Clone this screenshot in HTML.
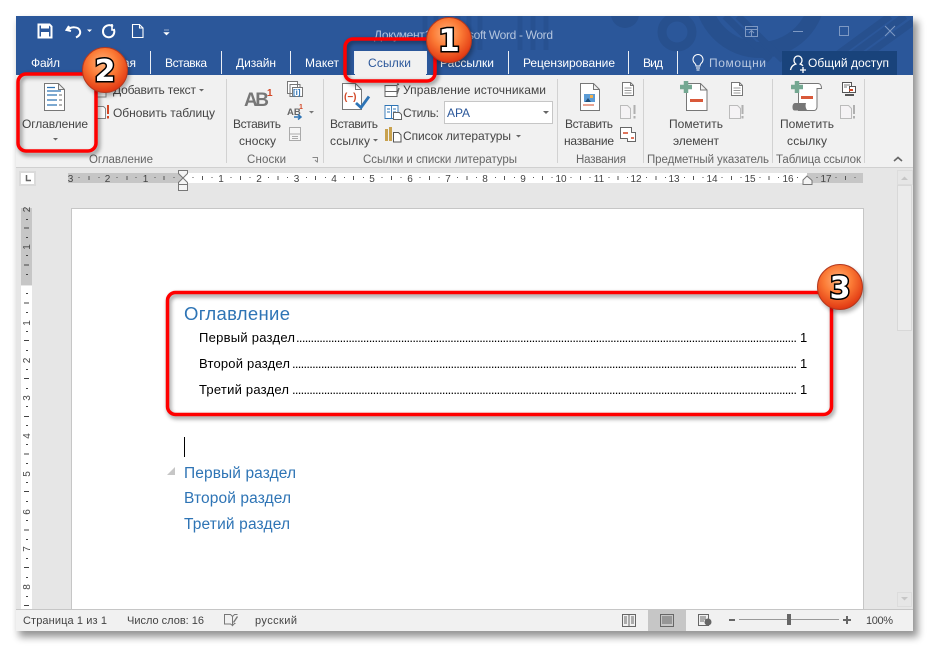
<!DOCTYPE html>
<html><head><meta charset="utf-8"><style>
html,body{margin:0;padding:0;background:#fff;width:929px;height:647px;overflow:hidden}
svg{display:block;position:absolute;left:0;top:0}
text{font-family:"Liberation Sans","DejaVu Sans",sans-serif;font-size:12px;fill:#444;white-space:pre}
.tab text{fill:#fff}
.grp text{fill:#666;font-size:11.5px}
.st text{fill:#444;font-size:11px}
.toc text{fill:#000;font-size:13px}
.h text{fill:#2e74b5;font-size:15.5px}
.rl text{font-size:10px;fill:#444}
</style></head><body>
<svg width="929" height="647" viewBox="0 0 929 647" xmlns="http://www.w3.org/2000/svg">
<defs>
<filter id="ws" x="-5%" y="-5%" width="110%" height="110%"><feGaussianBlur stdDeviation="4"/></filter>
<filter id="rs" x="-10%" y="-20%" width="120%" height="140%"><feGaussianBlur stdDeviation="2"/></filter>
<radialGradient id="ball" cx="45%" cy="35%" r="70%"><stop offset="0" stop-color="#ffb27a"/><stop offset=".45" stop-color="#fb7a35"/><stop offset="1" stop-color="#dc2c0c"/></radialGradient>
<clipPath id="bar"><rect x="16" y="16" width="897" height="59"/></clipPath>
</defs>
<rect x="19" y="21" width="899" height="616" fill="#000" opacity=".42" filter="url(#ws)"/>
<rect x="16" y="16" width="897" height="615" fill="#e6e6e6"/>
<!-- title bar -->
<rect x="16" y="16" width="897" height="59" fill="#2b579a"/>
<g clip-path="url(#bar)" fill="none" stroke="#27508e">
<circle cx="677" cy="32" r="15" stroke-width="9"/>
<circle cx="625" cy="14" r="14" fill="#27508e" stroke="none"/>
<circle cx="760" cy="-8" r="58" stroke-width="16"/>
<path d="M425 16V50M436 16V50M447 16V50M458 16V50M469 16V50M480 16V50M520 16V50M533 16V50M546 16V50" stroke-width="5" opacity=".8"/>
<path d="M830 60L890 16M845 60L905 16M860 60L913 22M725 16L770 60M738 16L783 60" stroke-width="7"/>
</g>
<!-- QAT -->
<g>
<path d="M38.500 24.500h11l2 2v11h-13z" fill="none" stroke="#fff" stroke-width="2"/>
<rect x="41" y="24" width="8" height="4.500" fill="#fff"/><rect x="41" y="32" width="8" height="5" fill="#fff"/>
<path d="M69 26l-2.500 4 4.500 1M67.500 30c3-3.500 11-4 12.500 1 .8 3-1 5-4 6.500" fill="none" stroke="#fff" stroke-width="2"/>
<path d="M87 29.500h5l-2.500 2.500z" fill="#fff"/>
<path d="M113 26.500c-4-3-10-.5-10 5 0 6.500 9 8 11 2 .5-1.500.4-3-.2-4.500" fill="none" stroke="#fff" stroke-width="2"/><path d="M112 24v6h3" fill="none" stroke="#fff" stroke-width="1.600"/>
<path d="M132.500 24.500h7l3.500 3.500v9.500h-10.500z M139.500 24.500v3.500h3.500" fill="none" stroke="#fff" stroke-width="1.100"/>
<path d="M164 30h5M164 32.500h5l-2.500 2.500z" fill="#fff" stroke="#fff" stroke-width=".6"/>
</g>
<text x="374" y="39" textLength="179" style="fill:#b4c5de;font-size:12px">Документ1 - Microsoft Word - Word</text>
<g fill="none" stroke="#7e99c3">
<path d="M745.500 26.500h12v10h-12zM745.500 29.500h12M751.500 36v-5M749 33l2.500-2.500 2.500 2.500"/>
<path d="M793 31.500h10"/>
<rect x="839.500" y="26.500" width="9" height="9"/>
<path d="M885 26l10 10M895 26l-10 10"/>
</g>
<!-- tabs -->
<rect x="782" y="51" width="115" height="24" fill="#19437b"/>
<g stroke="#fff" opacity=".9"><path d="M150.500 51v23M221.500 51v23M290.500 51v23M508.500 51v23M628.500 51v23M677.500 51v23M354.500 51v23M426.500 51v23"/></g>
<rect x="355" y="51" width="71" height="24" fill="#f1f1f1"/>
<g class="tab">
<text x="31" y="67" textLength="29">Файл</text>
<text x="91" y="67" textLength="45">Главная</text>
<text x="165" y="67" textLength="42">Вставка</text>
<text x="236" y="67" textLength="40">Дизайн</text>
<text x="305" y="67" textLength="34">Макет</text>
<text x="440" y="67" textLength="54">Рассылки</text>
<text x="523" y="67" textLength="92">Рецензирование</text>
<text x="643" y="67" textLength="20">Вид</text>
<text x="709" y="67" textLength="57" style="fill:#b9c8e0">Помощни</text>
<text x="808" y="67" textLength="81">Общий доступ</text>
</g>
<text x="368" y="67" textLength="43" style="fill:#2b579a">Ссылки</text>
<path d="M695 57.500a5 5 0 1 1 6 0c-.6.6-1 1.500-1 2.500h-4c0-1-.4-1.900-1-2.500zM696 62h4M696.500 64h3" fill="none" stroke="#fff" transform="translate(0,6)"/>
<path d="M798 56c-2.500 0-4 2-4 4.200 0 1.800.8 3 1.800 3.800-3 1-4.800 3-5.300 6M798 56c2.500 0 4 2 4 4.200 0 1.800-.8 3-1.800 3.800 1 .4 2 1 2.800 1.700M800 70h6M803 67v6" fill="none" stroke="#fff" stroke-width="1.300"/>
<!-- ribbon -->
<rect x="16" y="75" width="897" height="92" fill="#f1f1f1"/>
<rect x="16" y="167" width="897" height="1" fill="#d0d0d0"/>
<g stroke="#d2d2d2"><path d="M226.500 79v84M323.500 79v84M557.500 79v84M643.500 79v84M772.500 79v84M864.500 79v84"/></g>
<!-- Оглавление icon -->
<path d="M44.500 83.500h14l6 6v21h-20z M58.500 83.500v6h6" fill="#fff" stroke="#777"/>
<path d="M47 87.500h8M47 91h14M47 95h10M47 100h10M47 105h10" stroke="#2e74b5" stroke-width="1.200"/>
<path d="M59 95h3M59 100h3M59 105h3" stroke="#888" stroke-width="1.200"/>
<text x="22" y="128" textLength="66">Оглавление</text>
<path d="M53 138h5l-2.500 2.500z" fill="#666"/>
<!-- Add/update -->
<path d="M97 85h9v12h-9z" fill="#fff" stroke="#888"/>
<text x="113" y="94" textLength="83">Добавить текст</text>
<path d="M199 89h5l-2.500 2.500z" fill="#666"/>
<path d="M96.500 106.500h7l2 2v10h-9z" fill="#fff" stroke="#888"/><path d="M108 105v9M108 116v2.500" stroke="#d24726" stroke-width="2"/>
<text x="113" y="117" textLength="102">Обновить таблицу</text>
<!-- Сноски -->
<text x="244" y="106" style="font-size:19px;font-weight:bold;fill:#777" textLength="25">AB</text>
<text x="267" y="96" style="font-size:10px;fill:#d24726;font-weight:bold">1</text>
<text x="233" y="128" textLength="48">Вставить</text>
<text x="239" y="145" textLength="37">сноску</text>
<path d="M287.500 81.500h10v12h-10zM290 84.500h10v12h-10z" fill="#fff" stroke="#777"/><path d="M292.500 87.500h10v9h-10z" fill="#fff" stroke="#777"/>
<text x="293" y="95" style="font-size:8px;fill:#2e74b5;font-weight:bold">[i]</text>
<text x="287" y="115" style="font-size:9.500px;font-weight:bold;fill:#666">AB</text><text x="299" y="109" style="font-size:7px;font-weight:bold;fill:#d24726">1</text>
<path d="M294 117h6M298 114.500l3 2.500-3 2.500" fill="none" stroke="#2e74b5" stroke-width="1.500"/>
<path d="M309 111h5l-2.500 2.500z" fill="#777"/>
<path d="M289.500 127.500h11v13h-11z" fill="#f5f5f5" stroke="#aaa"/><path d="M289.500 134h11M292 136.500h6M292 138.500h6" stroke="#aaa"/>
<!-- Ссылки icon -->
<path d="M342.500 83.500h13l6 6v20h-19z" fill="#fff" stroke="#777"/><path d="M355.500 83.500v6h6" fill="none" stroke="#777"/>
<text x="344" y="100" style="font-size:10px;font-weight:bold;fill:#d24726">(−)</text>
<path d="M356 103l5 4.500 8-11" fill="none" stroke="#2e74b5" stroke-width="2.800"/>
<text x="330" y="128" textLength="48">Вставить</text>
<text x="330" y="145" textLength="40">ссылку</text>
<path d="M373 139h5l-2.500 2.500z" fill="#666"/>
<path d="M385 85.500h12v6h-12zM385 91.500h12v5h-12z" fill="#fff" stroke="#666"/><path d="M397 84l2 .5M399 88l-2 6" stroke="#666" stroke-width="1.500"/>
<text x="403" y="94" textLength="143">Управление источниками</text>
<path d="M385 105.500h13v13h-13zM391.500 105.500v13M387 109h3M387 112h3M393 109h3M393 112h3" fill="#fff" stroke="#2e74b5" stroke-width=".9"/>
<path d="M393.500 112.500h6l2 2v5h-8z" fill="#fff" stroke="#666"/>
<text x="403" y="117" textLength="36">Стиль:</text>
<rect x="444.500" y="101.500" width="108" height="22" fill="#fff" stroke="#c6c6c6"/>
<text x="447" y="117" textLength="23" style="fill:#2b579a">APA</text>
<path d="M543 111h6l-3 3z" fill="#666"/>
<path d="M385 129h3v12h-3zM389 127h3v14h-3z" fill="#c9a24e"/><path d="M393.500 132.500h5l2.500 2.500v7h-7.500z" fill="#fff" stroke="#555"/>
<text x="403" y="140" textLength="108">Список литературы</text>
<path d="M516 135h5l-2.500 2.500z" fill="#666"/>
<!-- Названия -->
<path d="M580.500 83.500h13l6 6v21h-19z M593.500 83.500v6h6" fill="#fff" stroke="#777"/>
<rect x="584" y="94" width="11" height="8" fill="#5b9bd5"/><path d="M585 102l3-4 3 4z" fill="#1f4e79"/><rect x="590" y="95" width="3" height="3" fill="#f0b050"/>
<path d="M583 105h11" stroke="#d24726"/>
<text x="565" y="128" textLength="48">Вставить</text>
<text x="564" y="145" textLength="50">название</text>
<path d="M622.500 82.500h8l3 3v10h-11zM630.500 82.500v3h3" fill="#fff" stroke="#777"/><path d="M624.500 88h7M624.500 90.500h7M624.500 93h7" stroke="#999"/>
<path d="M620.500 105.500h7l3 3v10h-10z" fill="#f5f3f5" stroke="#bbb"/><path d="M634.500 105v9M634.500 116v2.500" stroke="#b0b0b0" stroke-width="2"/>
<path d="M620.500 127.500h11v11h-11z" fill="#fff" stroke="#666"/><path d="M623 133h5" stroke="#d24726" stroke-width="1.500"/><path d="M631.500 132.500h4v9h-8v-3" fill="#fff" stroke="#666"/><path d="M631 138h3" stroke="#d24726" stroke-width="1.500"/>
<!-- Пометить элемент -->
<path d="M686.500 83.500h14l6.500 6.500v20.500h-20.500z M700.500 83.500v6.500h6.500" fill="#fff" stroke="#777"/>
<path d="M690 100.500h13" stroke="#d9593a" stroke-width="3"/>
<path d="M680 87h12M686 81v12" stroke="#74a892" stroke-width="4.500"/>
<text x="669" y="128" textLength="54">Пометить</text>
<text x="673" y="145" textLength="46">элемент</text>
<path d="M731.500 82.500h8l3 3v10h-11z M739.500 82.500v3h3" fill="#fff" stroke="#777"/><path d="M733.500 88h7M733.500 90.500h7M733.500 93h7" stroke="#999"/>
<path d="M729.500 105.500h8l3 3v10h-11z" fill="#f5f3f5" stroke="#bbb"/><path d="M742.500 105v9M742.500 116v2.500" stroke="#b0b0b0" stroke-width="2"/>
<!-- Пометить ссылку -->
<path d="M798.500 83.500h19.500c2.500 0 3.500 2.500 3.500 5h-4.500v18.500c0 2.200-1.500 3.500-3 3.500h-15.500z" fill="#fff" stroke="#777"/>
<path d="M795 103h11c-.8 2.500-.5 5.500 1.500 7.500h-13c-1.500 0-2-1.500-2-3.500s1-4 2.500-4z" fill="#777"/>
<path d="M801 97.500h12" stroke="#d9593a" stroke-width="3"/>
<path d="M791 87h12M797 81v12" stroke="#74a892" stroke-width="4.500"/>
<text x="780" y="128" textLength="54">Пометить</text>
<text x="787" y="145" textLength="40">ссылку</text>
<path d="M842.500 82.500h9v10h-9z" fill="#fff" stroke="#555"/><path d="M844 85h6M844 87h3" stroke="#777"/><path d="M849.500 86.500h6v6h-6z" fill="#fff" stroke="#555"/><rect x="849" y="89" width="4" height="2" fill="#d24726"/><path d="M845 94h9v2h-9z" fill="#555"/>
<path d="M840.500 105.500h8l3 3v10h-11z" fill="#f5f3f5" stroke="#bbb"/><path d="M854 105v9M854 116v2.500" stroke="#b0b0b0" stroke-width="2"/>
<path d="M894 161l4-3.500 4 3.500" fill="none" stroke="#666" stroke-width="1.600"/>
<g class="grp">
<text x="89" y="163" textLength="64">Оглавление</text>
<text x="247" y="163" textLength="39">Сноски</text>
<text x="363" y="163" textLength="154">Ссылки и списки литературы</text>
<text x="576" y="163" textLength="50">Названия</text>
<text x="647" y="163" textLength="122">Предметный указатель</text>
<text x="776" y="163" textLength="85">Таблица ссылок</text>
</g>
<path d="M312.500 157.500h5v5M315 160l2 2" fill="none" stroke="#888"/>
<!-- ruler -->
<rect x="16" y="168" width="897" height="442" fill="#e6e6e6"/>
<rect x="20" y="172" width="15" height="13" fill="#fff" stroke="#dadada" stroke-width="2"/>
<path d="M26.500 175v5.500h4.500" fill="none" stroke="#666" stroke-width="1.500"/>
<rect x="68" y="173" width="115" height="10" fill="#c6c6c6"/>
<rect x="183" y="173" width="624" height="10" fill="#fff"/>
<rect x="807" y="173" width="56" height="10" fill="#c6c6c6"/>
<g class="rl" text-anchor="middle">
<text x="70.500" y="182">3</text><text x="107.500" y="182">2</text><text x="145.500" y="182">1</text>
<text x="221" y="182">1</text><text x="259" y="182">2</text><text x="296.500" y="182">3</text><text x="334" y="182">4</text><text x="372" y="182">5</text><text x="410" y="182">6</text><text x="448" y="182">7</text><text x="485" y="182">8</text><text x="523" y="182">9</text><text x="561" y="182">10</text><text x="599" y="182">11</text><text x="636" y="182">12</text><text x="674" y="182">13</text><text x="712" y="182">14</text><text x="750" y="182">15</text><text x="788" y="182">16</text><text x="826" y="182">17</text>
</g>
<g fill="#555">
<path d="M78.500 177h1v1h-1zM88.500 176h1v4h-1zM98.500 177h1v1h-1zM116.500 177h1v1h-1zM126.500 176h1v4h-1zM135.500 177h1v1h-1zM154.500 177h1v1h-1zM163.500 176h1v4h-1zM173.500 177h1v1h-1z"/>
<path d="M192.500 177h1v1h-1zM202 176h1v4h-1zM211.500 177h1v1h-1zM230.500 177h1v1h-1zM240 176h1v4h-1zM249.500 177h1v1h-1zM268 177h1v1h-1zM277.500 176h1v4h-1zM287 177h1v1h-1zM306 177h1v1h-1zM315 176h1v4h-1zM325 177h1v1h-1zM344 177h1v1h-1zM353 176h1v4h-1zM363 177h1v1h-1zM381.500 177h1v1h-1zM391 176h1v4h-1zM400.500 177h1v1h-1zM419.500 177h1v1h-1zM429 176h1v4h-1zM438.500 177h1v1h-1zM457 177h1v1h-1zM466.500 176h1v4h-1zM476 177h1v1h-1zM495 177h1v1h-1zM504 176h1v4h-1zM514 177h1v1h-1zM533 177h1v1h-1zM542 176h1v4h-1zM551.500 177h1v1h-1zM570.500 177h1v1h-1zM580 176h1v4h-1zM589.500 177h1v1h-1zM608.500 177h1v1h-1zM617.500 176h1v4h-1zM627 177h1v1h-1zM646 177h1v1h-1zM655.500 176h1v4h-1zM665 177h1v1h-1zM684 177h1v1h-1zM693 176h1v4h-1zM702.500 177h1v1h-1zM721.500 177h1v1h-1zM731 176h1v4h-1zM740.500 177h1v1h-1zM759.500 177h1v1h-1zM768.500 176h1v4h-1zM778 177h1v1h-1zM797 177h1v1h-1zM835.500 177h1v1h-1zM845 176h1v4h-1zM854.500 177h1v1h-1z"/>
<path d="M816.500 177h1v1h-1z"/>
</g>
<path d="M178.500 170.500h9v3l-4.500 4.500-4.500-4.500zM183 178l-4.500 4.500v2h9v-2zM178.500 184.500h9v6h-9z" fill="#f4f4f4" stroke="#777"/>
<path d="M806 179.500l-4-3.500-4 4v4.500h9v-4z" fill="#f4f4f4" stroke="#777" transform="translate(5,0)"/>
<!-- v ruler -->
<rect x="21" y="208" width="11" height="77" fill="#c6c6c6"/>
<rect x="21" y="286" width="11" height="324" fill="#fff"/>
<g fill="#444">
<path d="M26 219h2v1h-2zM24 227.500h5v1h-5zM26 237h2v1h-2zM26 255h2v1h-2zM24 264.500h5v1h-5zM26 274h2v1h-2zM26 293h2v1h-2zM24 302.500h5v1h-5zM26 312h2v1h-2zM26 331h2v1h-2zM24 340h5v1h-5zM26 350h2v1h-2zM26 369h2v1h-2zM24 378h5v1h-5zM26 388h2v1h-2zM26 406h2v1h-2zM24 416h5v1h-5zM26 425h2v1h-2zM26 444h2v1h-2zM24 453.500h5v1h-5zM26 463h2v1h-2zM26 482h2v1h-2zM24 491h5v1h-5zM26 501h2v1h-2zM26 520h2v1h-2zM24 529.500h5v1h-5zM26 539h2v1h-2zM26 558h2v1h-2zM24 567h5v1h-5zM26 577h2v1h-2zM26 596h2v1h-2zM24 605h5v1h-5z"/>
</g>
<g class="rl" text-anchor="middle">
<text transform="translate(30,209.500) rotate(-90)">2</text><text transform="translate(30,247) rotate(-90)">1</text><text transform="translate(30,323) rotate(-90)">1</text><text transform="translate(30,360.500) rotate(-90)">2</text><text transform="translate(30,398) rotate(-90)">3</text><text transform="translate(30,436) rotate(-90)">4</text><text transform="translate(30,474) rotate(-90)">5</text><text transform="translate(30,512) rotate(-90)">6</text><text transform="translate(30,549) rotate(-90)">7</text><text transform="translate(30,587) rotate(-90)">8</text>
</g>
<!-- scrollbar -->
<rect x="897.500" y="170.500" width="15" height="14" fill="#e6e6e6" stroke="#dcdcdc"/><path d="M901 180h7l-3.500-3.500z" fill="#c6c6c6"/>
<rect x="897.500" y="185.500" width="14" height="145" fill="#ebebeb" stroke="#d8d8d8"/>
<rect x="897.500" y="592.500" width="14" height="14" fill="#e6e6e6" stroke="#dcdcdc"/><path d="M901 597h7l-3.500 3.500z" fill="#c6c6c6"/>
<!-- page -->
<rect x="72" y="209" width="791" height="401" fill="#fff"/>
<path d="M71.500 610v-401.500h792v401.500" fill="none" stroke="#c6c6c6"/>
<text x="184" y="320" textLength="106" style="font-size:18.500px;fill:#2e74b5">Оглавление</text>
<g class="toc">
<text x="199" y="342" textLength="96">Первый раздел</text>
<text x="296" y="342" textLength="501">............................................................................................................................................................................</text>
<text x="800" y="342">1</text>
<text x="199" y="368" textLength="91">Второй раздел</text>
<text x="292" y="368" textLength="505">...............................................................................................................................................................................</text>
<text x="800" y="368">1</text>
<text x="199" y="394" textLength="90">Третий раздел</text>
<text x="292" y="394" textLength="505">...............................................................................................................................................................................</text>
<text x="800" y="394">1</text>
</g>
<rect x="184" y="437" width="1" height="20" fill="#000"/>
<path d="M167 475h8v-8z" fill="#c6c6c6"/>
<g class="h">
<text x="184" y="478" textLength="112">Первый раздел</text>
<text x="184" y="503" textLength="107">Второй раздел</text>
<text x="184" y="529" textLength="106">Третий раздел</text>
</g>
<!-- status -->
<rect x="16" y="610" width="897" height="21" fill="#f1f1f1"/>
<rect x="16" y="609" width="897" height="1" fill="#c6c6c6"/>
<g class="st">
<text x="23" y="624" textLength="84">Страница 1 из 1</text>
<text x="127" y="624" textLength="77">Число слов: 16</text>
<text x="255" y="624" textLength="42">русский</text>
<text x="866" y="624" textLength="27">100%</text>
</g>
<path d="M224.500 614.500h6l2 2v9l-2-1.500h-6zM232.500 616.500l2-2h3M232.500 625.500l2-2h1" fill="none" stroke="#777"/><path d="M233 622l1 1 4-6-1-1z" fill="#777"/>
<rect x="648" y="610" width="38" height="21" fill="#c6c6c6"/>
<path d="M622.500 614.500h13v12h-13zM629 614.500v12M624 617h3M624 619h3M624 621h3M624 623h3M631 617h3M631 619h3M631 621h3M631 623h3" fill="none" stroke="#666"/>
<path d="M660.500 614.500h13v12h-13zM662 617h10M662 619h10M662 621h10M662 623h10" fill="none" stroke="#666"/>
<path d="M698.500 614.500h10v11h-10zM700 617h6M700 619h6M700 621h4" fill="none" stroke="#666"/><circle cx="708" cy="622" r="3.500" fill="#666"/>
<path d="M729 620h6" stroke="#666" stroke-width="2"/>
<path d="M739 619.500h100" stroke="#999"/>
<rect x="787" y="614" width="4" height="11" fill="#666"/>
<path d="M843 620h8M847 616v8" stroke="#666" stroke-width="2"/>
<!-- red boxes -->
<g fill="none" stroke="#000" stroke-width="4" opacity=".4" filter="url(#rs)">
<rect x="347" y="41" width="90" height="42" rx="8"/>
<rect x="20" y="76" width="78" height="78" rx="8"/>
<rect x="169" y="295" width="664" height="122" rx="8"/>
</g>
<g fill="none" stroke="#f00" stroke-width="3.500">
<rect x="345" y="39" width="90" height="42" rx="8"/>
<rect x="18" y="74" width="78" height="77" rx="8"/>
<rect x="167.500" y="292.500" width="664" height="122" rx="8"/>
</g>
<!-- badges -->
<g>
<circle cx="451" cy="43" r="23" fill="#000" opacity=".3" filter="url(#rs)"/>
<circle cx="449" cy="40" r="22.500" fill="url(#ball)" stroke="#b5391f"/>
<text x="449" y="51" text-anchor="middle" style="font-size:31px;font-weight:bold;fill:#fff;stroke:#000;stroke-width:3px;paint-order:stroke;font-family:'DejaVu Sans',sans-serif">1</text>
<circle cx="107" cy="73" r="23" fill="#000" opacity=".3" filter="url(#rs)"/>
<circle cx="105" cy="70" r="22.500" fill="url(#ball)" stroke="#b5391f"/>
<text x="105" y="81" text-anchor="middle" style="font-size:30px;font-weight:bold;fill:#fff;stroke:#000;stroke-width:3px;paint-order:stroke;font-family:'DejaVu Sans',sans-serif">2</text>
<circle cx="842" cy="290" r="23" fill="#000" opacity=".3" filter="url(#rs)"/>
<circle cx="840" cy="287" r="22.500" fill="url(#ball)" stroke="#b5391f"/>
<text x="840" y="298" text-anchor="middle" style="font-size:30px;font-weight:bold;fill:#fff;stroke:#000;stroke-width:3px;paint-order:stroke;font-family:'DejaVu Sans',sans-serif">3</text>
</g>
</svg>
</body></html>
